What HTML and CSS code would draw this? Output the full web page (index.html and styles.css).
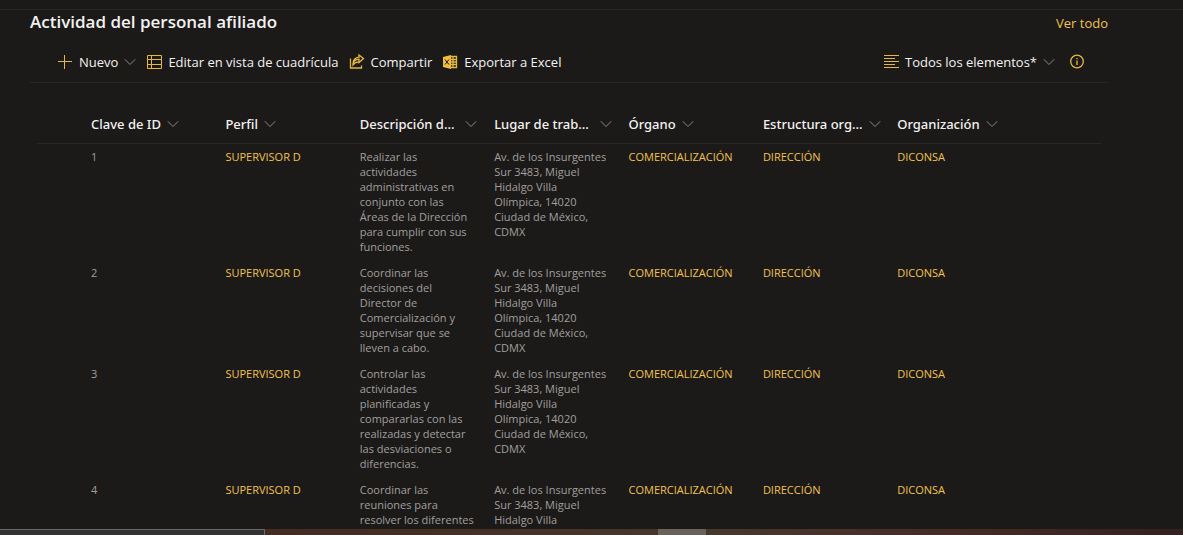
FILE: index.html
```
<!DOCTYPE html>
<html lang="es">
<head>
<meta charset="utf-8">
<meta name="viewport" content="width=device-width, initial-scale=1">
<title>Actividad del personal afiliado</title>
<link rel="stylesheet" href="styles.css">
</head>
<body>
<svg class="symbols" aria-hidden="true">
  <symbol id="chevron" viewBox="0 0 12 12"><path d="M.8 3.300 6 8.500l5.200-5.200" fill="none" stroke="currentColor"/></symbol>
</svg>
<main class="page">
  <header class="heading">
    <h1 class="title">Actividad del personal afiliado</h1>
    <a class="see-all" href="#">Ver todo</a>
  </header>
  <div class="toolbar">
    <button class="command" type="button">
      <svg class="icon" viewBox="0 0 16 16"><path d="M7.500 1v14M1 7.500h14" /></svg>
      <span>Nuevo</span>
      <svg class="chevron"><use href="#chevron"/></svg>
    </button>
    <button class="command" type="button">
      <svg class="icon" viewBox="0 0 16 16"><path d="M1.500 1.500h14v13h-14zM1.500 5.500h14M1.500 10.500h14M5.500 1.500v13"/></svg>
      <span>Editar en vista de cuadrícula</span>
    </button>
    <button class="command" type="button">
      <svg class="icon bold" viewBox="0 0 16 16"><path d="M1.500 4.500v9.500h11v-2.500M4 11c.3-3.800 2.300-5.600 6-5.800V8.500l4.500-4L10 1v2.200C5.800 3.600 3.800 6.500 4 11c1.500-2.200 3.200-3.200 6-3.200"/></svg>
      <span>Compartir</span>
    </button>
    <button class="command" type="button">
      <svg class="icon" viewBox="0 0 16 16"><path class="bold" d="M8 2.500h6.500v11H8M8 5.500h6.500M8 8h6.500M8 10.500h6.500M11 2.500v11"/><path class="solid" d="M1 3l8-2v14l-8-2z"/><path class="cut" d="M3 5.500l4 5M7 5.500l-4 5"/></svg>
      <span>Exportar a Excel</span>
    </button>
    <button class="command view" type="button">
      <svg class="icon" viewBox="0 0 16 16"><path d="M1 1.500h15M1 4.500h11M1 7.500h15M1 10.500h11M1 13.500h15"/></svg>
      <span>Todos los elementos*</span>
      <svg class="chevron"><use href="#chevron"/></svg>
    </button>
    <button class="command" type="button" aria-label="Información">
      <svg class="icon bold" viewBox="0 0 16 16"><circle cx="8" cy="7.500" r="6.300"/><path d="M8 6.500v4.500M8 4v1.300"/></svg>
    </button>
  </div>
  <div class="list">
    <table class="grid">
      <colgroup><col class="col-select"><col class="col-data"><col class="col-data"><col class="col-data"><col class="col-data"><col class="col-data"><col class="col-data"><col></colgroup>
      <thead>
        <tr>
          <td></td>
          <th scope="col"><button class="sort" type="button">Clave de ID<svg class="chevron"><use href="#chevron"/></svg></button></th>
          <th scope="col"><button class="sort" type="button">Perfil<svg class="chevron"><use href="#chevron"/></svg></button></th>
          <th scope="col"><button class="sort full" type="button">Descripción d...<svg class="chevron"><use href="#chevron"/></svg></button></th>
          <th scope="col"><button class="sort full" type="button">Lugar de trab...<svg class="chevron"><use href="#chevron"/></svg></button></th>
          <th scope="col"><button class="sort" type="button">Órgano<svg class="chevron"><use href="#chevron"/></svg></button></th>
          <th scope="col"><button class="sort full" type="button">Estructura org...<svg class="chevron"><use href="#chevron"/></svg></button></th>
          <th scope="col"><button class="sort" type="button">Organización<svg class="chevron"><use href="#chevron"/></svg></button></th>
        </tr>
      </thead>
      <tbody>
        <tr>
          <td></td><td>1</td>
          <td><a class="link" href="#">SUPERVISOR D</a></td>
          <td>Realizar las actividades administrativas en conjunto con las Áreas de la Dirección para cumplir con sus funciones.</td>
          <td>Av. de los Insurgentes Sur 3483, Miguel Hidalgo Villa Olímpica,&nbsp;14020 Ciudad de México, CDMX</td>
          <td><a class="link" href="#">COMERCIALIZACIÓN</a></td>
          <td><a class="link" href="#">DIRECCIÓN</a></td>
          <td><a class="link" href="#">DICONSA</a></td>
        </tr>
        <tr>
          <td></td><td>2</td>
          <td><a class="link" href="#">SUPERVISOR D</a></td>
          <td>Coordinar las decisiones del Director de Comercialización y supervisar que se lleven a cabo.</td>
          <td>Av. de los Insurgentes Sur 3483, Miguel Hidalgo Villa Olímpica,&nbsp;14020 Ciudad de México, CDMX</td>
          <td><a class="link" href="#">COMERCIALIZACIÓN</a></td>
          <td><a class="link" href="#">DIRECCIÓN</a></td>
          <td><a class="link" href="#">DICONSA</a></td>
        </tr>
        <tr>
          <td></td><td>3</td>
          <td><a class="link" href="#">SUPERVISOR D</a></td>
          <td>Controlar las actividades planificadas y compararlas con las realizadas y detectar las desviaciones o diferencias.</td>
          <td>Av. de los Insurgentes Sur 3483, Miguel Hidalgo Villa Olímpica,&nbsp;14020 Ciudad de México, CDMX</td>
          <td><a class="link" href="#">COMERCIALIZACIÓN</a></td>
          <td><a class="link" href="#">DIRECCIÓN</a></td>
          <td><a class="link" href="#">DICONSA</a></td>
        </tr>
        <tr>
          <td></td><td>4</td>
          <td><a class="link" href="#">SUPERVISOR D</a></td>
          <td>Coordinar las reuniones para resolver los diferentes</td>
          <td>Av. de los Insurgentes Sur 3483, Miguel Hidalgo Villa</td>
          <td><a class="link" href="#">COMERCIALIZACIÓN</a></td>
          <td><a class="link" href="#">DIRECCIÓN</a></td>
          <td><a class="link" href="#">DICONSA</a></td>
        </tr>
      </tbody>
    </table>
  </div>
</main>
<footer class="taskbar">
  <div class="taskbar-search"></div>
  <div class="taskbar-apps"><div class="taskbar-active"></div></div>
</footer>
</body>
</html>
```
FILE: styles.css
```
* { box-sizing: border-box; }
body {
  margin: 0;
  height: 100vh;
  display: flex;
  flex-direction: column;
  overflow: hidden;
  background: #1b1a19;
  color: #f3f2f1;
  font-family: "Open Sans", "Noto Sans", sans-serif;
  font-size: 13px;
}
button { font: inherit; color: inherit; background: none; border: 0; padding: 0; cursor: pointer; }
a { text-decoration: none; color: #f2c24c; }
.symbols { display: none; }
.page {
  flex: 1;
  min-height: 0;
  overflow: hidden;
  margin-top: 9px;
  border-top: 1px solid #292827;
  padding: 0 75px 0 30px;
}
.heading { display: flex; justify-content: space-between; align-items: flex-start; height: 26px; }
.title { margin: 0; font-size: 17px; line-height: 24px; font-weight: 600; }
.see-all { line-height: 26px; }
.toolbar {
  display: flex;
  align-items: center;
  gap: 10px;
  height: 47px;
  padding: 5px 23px 0 27px;
  border-bottom: 1px solid #292827;
}
.command { display: flex; align-items: center; gap: 6px; white-space: nowrap; }
.view { margin-left: auto; margin-right: 4px; }
.icon { width: 16px; height: 16px; fill: none; stroke: #e6b840; stroke-width: 1; }
.icon.bold, .icon .bold { stroke-width: 1.3; }
.icon .solid { fill: #f0bd3c; stroke: none; }
.icon .cut { stroke: #1b1a19; stroke-width: 1; }
.chevron { width: 12px; height: 12px; color: #8a8886; flex: none; }
.list { padding: 22px 7px 0; }
.grid { width: 100%; table-layout: fixed; border-collapse: collapse; }
.col-select { width: 54px; }
.col-data { width: 12.63%; }
.grid th { text-align: left; overflow: visible; }
.grid thead tr { height: 38px; border-bottom: 1px solid #292827; }
.grid th, .grid td { padding: 0 17px 0 0; }
.sort { display: flex; align-items: center; gap: 6px; font-family: "Noto Sans", sans-serif; font-weight: 500; white-space: nowrap; }
.full { width: 100%; justify-content: space-between; }
.grid tbody td { padding: 5px 19px 6px 0; vertical-align: top; font-size: 11px; line-height: 15px; color: #a19f9d; }
.grid tbody td .link { white-space: nowrap; }
.taskbar { display: flex; height: 6px; flex: none; background: linear-gradient(90deg, #42251d, #443026 40%, #47382c 60%, #462b27 80%, #33211f); }
.taskbar-search { width: 265px; background: #323232; border: solid #686868; border-width: 1px 1px 0 0; }
.taskbar-apps { flex: 1; padding-left: 393px; }
.taskbar-active { width: 48px; height: 6px; background: #68625a; }
```
